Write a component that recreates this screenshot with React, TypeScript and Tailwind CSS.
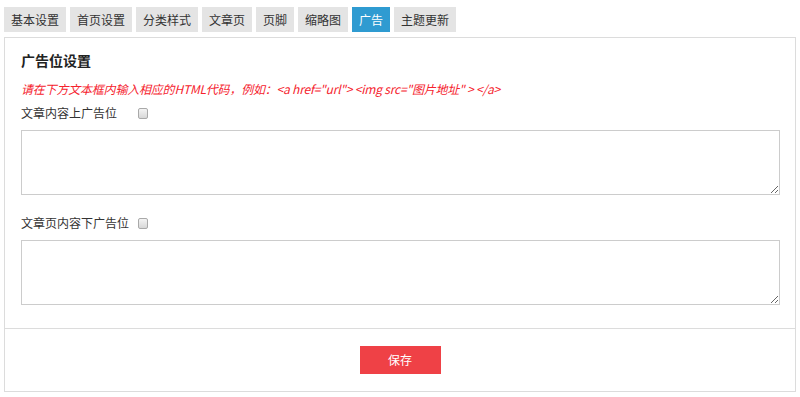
import React from "react";

const tabs = ["基本设置", "首页设置", "分类样式", "文章页", "页脚", "缩略图", "广告", "主题更新"];

function Check() {
  return (
    <span className="inline-block w-[10px] h-[11px] border border-[#a9a9a9] rounded-[2px] bg-gradient-to-b from-[#f4f4f4] to-[#d8d8d8]" />
  );
}

export default function App() {
  return (
    <div
      className="w-[800px] h-[397px] bg-white text-[12px] text-[#333]"
      style={{ fontFamily: '"Noto Sans CJK SC", "Noto Sans", sans-serif' }}
    >
      <div className="flex gap-[4px] pl-[4px] pt-[7px]">
        {tabs.map((t) => (
          <div
            key={t}
            className={
              t === "广告"
                ? "h-[25px] px-[7px] flex items-center bg-[#2f9bd1] text-white"
                : "h-[25px] px-[7px] flex items-center bg-[#e4e4e4] text-[#333]"
            }
          >
            {t}
          </div>
        ))}
      </div>
      <div className="mt-[5px] mx-[4px] border border-[#dcdcdc] h-[355px] flex flex-col">
        <div className="px-[16px] pt-[12px] pb-[23px] border-b border-[#dcdcdc]">
          <div className="text-[14px] font-bold text-[#222] leading-[20px]">广告位设置</div>
          <div className="mt-[11px] italic text-[#f5222d] leading-[16px] tracking-[-0.2px]">
            请在下方文本框内输入相应的HTML代码，例如：&lt;a href="url"&gt; &lt;img src="图片地址" &gt; &lt;/a&gt;
          </div>
          <div className="mt-[8px] flex items-center h-[16px]">
            <span className="w-[117px]">文章内容上广告位</span>
            <Check />
          </div>
          <textarea className="block mt-[9px] w-[759px] h-[65px] border border-[#ccc] outline-none resize" />
          <div className="mt-[20px] flex items-center h-[16px]">
            <span className="w-[117px]">文章页内容下广告位</span>
            <Check />
          </div>
          <textarea className="block mt-[9px] w-[759px] h-[65px] border border-[#ccc] outline-none resize" />
        </div>
        <div className="flex-1 flex items-center justify-center">
          <button className="w-[81px] h-[28px] bg-[#ef4146] text-white text-[12px]">保存</button>
        </div>
      </div>
    </div>
  );
}
